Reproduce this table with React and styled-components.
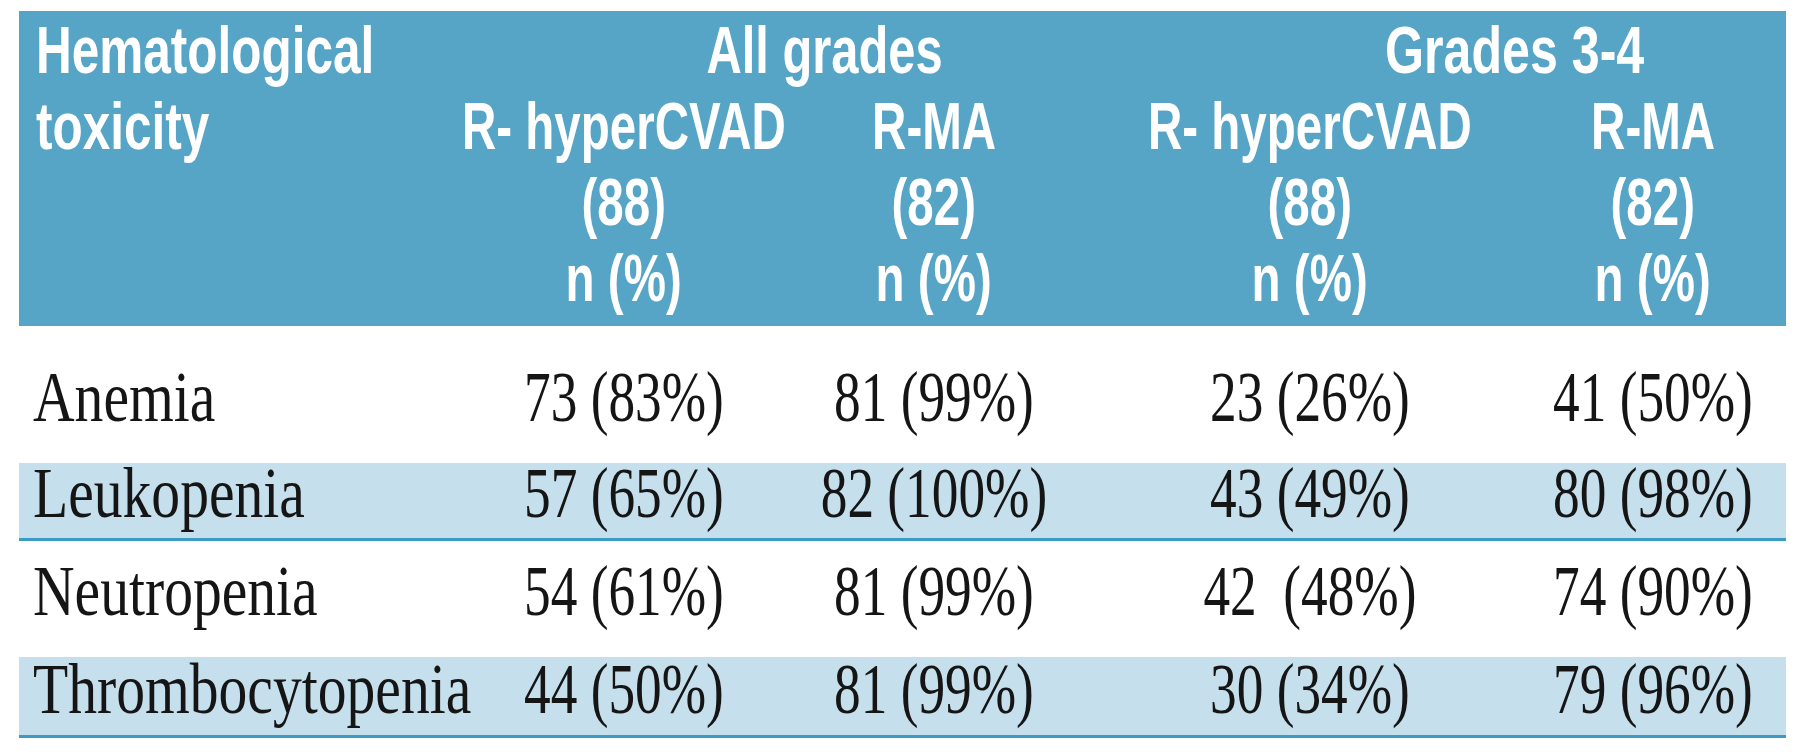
import React from 'react';
import styled, { createGlobalStyle } from 'styled-components';

const GlobalStyle = createGlobalStyle`
  html, body {
    margin: 0;
    padding: 0;
    background: #fff;
  }
`;

const COLS = '461px 288px 332px 420px 266px';

const Page = styled.div`
  padding: 11px 14px 0 19px;
  width: 1767px;
`;

const Head = styled.div`
  display: grid;
  grid-template-columns: ${COLS};
  grid-template-rows: 76px 228px;
  padding: 1px 0 10px;
  background: #57a5c6;
  color: #fff;
  font-family: "Liberation Sans", Arial, sans-serif;
  font-weight: bold;
  font-size: 66px;
  line-height: 76px;
`;

const HeadCell = styled.div`
  grid-row: ${(p) => (p.$rows ? `span ${p.$rows}` : 'auto')};
  grid-column: ${(p) => (p.$cols ? `span ${p.$cols}` : 'auto')};
  display: flex;
  flex-direction: column;
  align-items: ${(p) => (p.$align === 'left' ? 'flex-start' : 'center')};
  padding-left: ${(p) => p.$indent || 0}px;
  white-space: nowrap;
`;

// the source uses condensed faces, so squeeze the installed ones
const Squeeze = styled.span`
  display: inline-block;
  flex: none;
  transform: scaleX(${(p) => p.$k});
  transform-origin: ${(p) => p.$origin || 'center'};
  white-space: pre;
`;

const Row = styled.div`
  display: grid;
  grid-template-columns: ${COLS};
  box-sizing: border-box;
  height: ${(p) => p.$h}px;
  padding-top: ${(p) => p.$top}px;
  background: ${(p) => (p.$shade ? '#c6dfec' : 'transparent')};
  border-bottom: ${(p) => (p.$shade ? '3px solid #3c9bc3' : 'none')};
  font-family: "Liberation Serif", "Times New Roman", serif;
  font-size: 72px;
  line-height: 56px;
  color: #151515;
`;

const Label = styled.div`
  padding-left: 14px;
  white-space: nowrap;
`;

const Value = styled.div`
  display: flex;
  justify-content: center;
  white-space: nowrap;
`;

const rows = [
  { name: 'Anemia', h: 137, top: 43, vals: ['73 (83%)', '81 (99%)', '23 (26%)', '41 (50%)'] },
  { name: 'Leukopenia', h: 78, top: 2, shade: true, vals: ['57 (65%)', '82 (100%)', '43 (49%)', '80 (98%)'] },
  { name: 'Neutropenia', h: 116, top: 22, vals: ['54 (61%)', '81 (99%)', '42  (48%)', '74 (90%)'] },
  { name: 'Thrombocytopenia', h: 81, top: 4, shade: true, vals: ['44 (50%)', '81 (99%)', '30 (34%)', '79 (96%)'] },
];

const arms = [
  { name: 'R- hyperCVAD', n: 88 },
  { name: 'R-MA', n: 82 },
  { name: 'R- hyperCVAD', n: 88 },
  { name: 'R-MA', n: 82 },
];

export default function App() {
  return (
    <>
      <GlobalStyle />
      <Page>
        <Head>
          <HeadCell $rows={2} $align="left" $indent={17}>
            <Squeeze $k={0.75} $origin="left">Hematological</Squeeze>
            <Squeeze $k={0.75} $origin="left">toxicity</Squeeze>
          </HeadCell>
          <HeadCell $cols={2} $indent={70}>
            <Squeeze $k={0.74}>All grades</Squeeze>
          </HeadCell>
          <HeadCell $cols={2} $indent={144}>
            <Squeeze $k={0.76}>Grades 3-4</Squeeze>
          </HeadCell>
          {arms.map((a, i) => (
            <HeadCell key={i}>
              <Squeeze $k={0.72}>{a.name}</Squeeze>
              <Squeeze $k={0.72}>({a.n})</Squeeze>
              <Squeeze $k={0.72}>n (%)</Squeeze>
            </HeadCell>
          ))}
        </Head>
        {rows.map((r) => (
          <Row key={r.name} $h={r.h} $top={r.top} $shade={r.shade}>
            <Label>
              <Squeeze $k={0.8} $origin="left">{r.name}</Squeeze>
            </Label>
            {r.vals.map((v, i) => (
              <Value key={i}>
                <Squeeze $k={0.74}>{v}</Squeeze>
              </Value>
            ))}
          </Row>
        ))}
      </Page>
    </>
  );
}
